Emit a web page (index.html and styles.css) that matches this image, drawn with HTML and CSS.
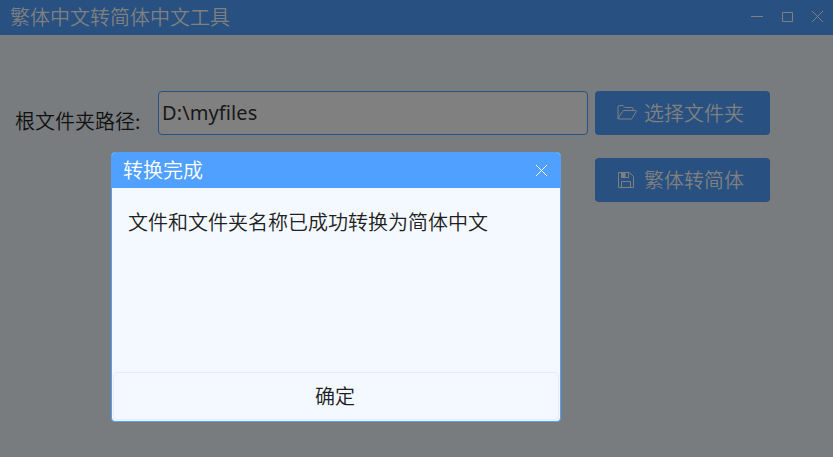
FILE: index.html
```
<!DOCTYPE html>
<html lang="zh-CN">
<head>
<meta charset="utf-8">
<title>繁体中文转简体中文工具</title>
<link rel="stylesheet" href="styles.css">
</head>
<body>
<div class="window">
  <header class="titlebar">
    <h1 class="title">繁体中文转简体中文工具</h1>
    <div class="controls">
      <svg width="13" height="13" viewBox="0 0 13 13"><path d="M0 6.5h12"/></svg>
      <svg width="13" height="13" viewBox="0 0 13 13"><path d="M1.5 2.5h10v9h-10z"/></svg>
      <svg width="13" height="13" viewBox="0 0 13 13"><path d="M1 1l11 11M12 1L1 12"/></svg>
    </div>
  </header>
  <main class="form">
    <label class="label" for="path">根文件夹路径:</label>
    <input class="input" id="path" type="text" value="D:\myfiles">
    <div class="actions">
      <button class="button">
        <svg width="20" height="18" viewBox="0 0 20 18"><path d="M1 14.5V3Q1 1.500 2.500 1.500H6l2 2h6.500Q16 3.500 16 5v1.500M1 14.500L5.500 7.500Q6 6.500 7 6.500H18.500Q20 6.500 19 8L15 14.500Q14.500 15 14 15H2Q1 15 1 14"/></svg>
        <span>选择文件夹</span>
      </button>
      <button class="button">
        <svg width="20" height="18" viewBox="0 0 20 18"><path d="M1.500 1.500H12.500L16.500 5.500V16.500H1.500zM4.500 16.500V10.500H13.500V16.500M4.500 1.500V6.500H11.500V1.500"/><path class="solid" d="M5 2H8.500V6.500H5z"/></svg>
        <span>繁体转简体</span>
      </button>
    </div>
  </main>
</div>
<section class="dialog" role="dialog">
  <header class="dialog-head">
    <h2 class="dialog-title">转换完成</h2>
    <svg width="13" height="13" viewBox="0 0 13 13"><path d="M1 1l11 11M12 1L1 12"/></svg>
  </header>
  <p class="message">文件和文件夹名称已成功转换为简体中文</p>
  <button class="confirm">确定</button>
</section>
</body>
</html>
```
FILE: styles.css
```
* { box-sizing: border-box; }
body, h1, h2, p { margin: 0; }
body, button, input {
  font-family: "Noto Sans", "Noto Sans CJK SC", sans-serif;
  font-size: 20px;
  line-height: 30px;
}
body { height: 457px; overflow: hidden; }
svg { display: block; fill: none; stroke: currentColor; stroke-width: 1; }
.solid { fill: currentColor; stroke: none; }
h1, h2, .label, .message, button {
  font-family: "Noto Sans CJK SC", sans-serif;
  font-size: 20px;
  font-weight: 350;
  white-space: nowrap;
}
.window { height: 457px; background: #797c7f; color: #808080; }
.titlebar {
  display: flex;
  align-items: center;
  justify-content: space-between;
  height: 35px;
  padding: 0 9px 2px 10px;
  background: #285080;
}
.controls { display: flex; gap: 17px; }
.form {
  display: grid;
  grid-template-columns: 143px 430px 175px;
  align-items: start;
  padding: 56px 0 0 15px;
}
.label { padding-top: 15px; color: #101010; }
.input {
  width: 430px;
  height: 44px;
  padding: 0 3px 2px;
  border: 1px solid #285080;
  border-radius: 4px;
  background: #808080;
  color: #181818;
  letter-spacing: 0.1px;
  outline: none;
}
.actions { display: grid; gap: 23px; margin-left: 7px; width: 175px; }
.button {
  display: flex;
  align-items: center;
  gap: 7px;
  height: 44px;
  padding: 0 0 0 22px;
  border: 0;
  border-radius: 4px;
  background: #285080;
  color: #808080;
}
.dialog {
  position: absolute;
  left: 111px;
  top: 152px;
  display: flex;
  flex-direction: column;
  width: 450px;
  height: 270px;
  border: 1px solid #50a0ff;
  border-radius: 4px;
  background: #f3f9ff;
  color: #202020;
  overflow: hidden;
}
.dialog-head {
  display: flex;
  align-items: center;
  justify-content: space-between;
  height: 35px;
  padding: 0 12px 1px 11px;
  background: #50a0ff;
  color: #fff;
}
.message { flex: 1; padding: 19px 16px; }
.confirm {
  height: 48px;
  margin: 0 1px 1px;
  padding: 0 2px 1px 0;
  border: 1px solid #e4edff;
  border-radius: 4px;
  background: #f3f9ff;
  color: #202020;
}
```
